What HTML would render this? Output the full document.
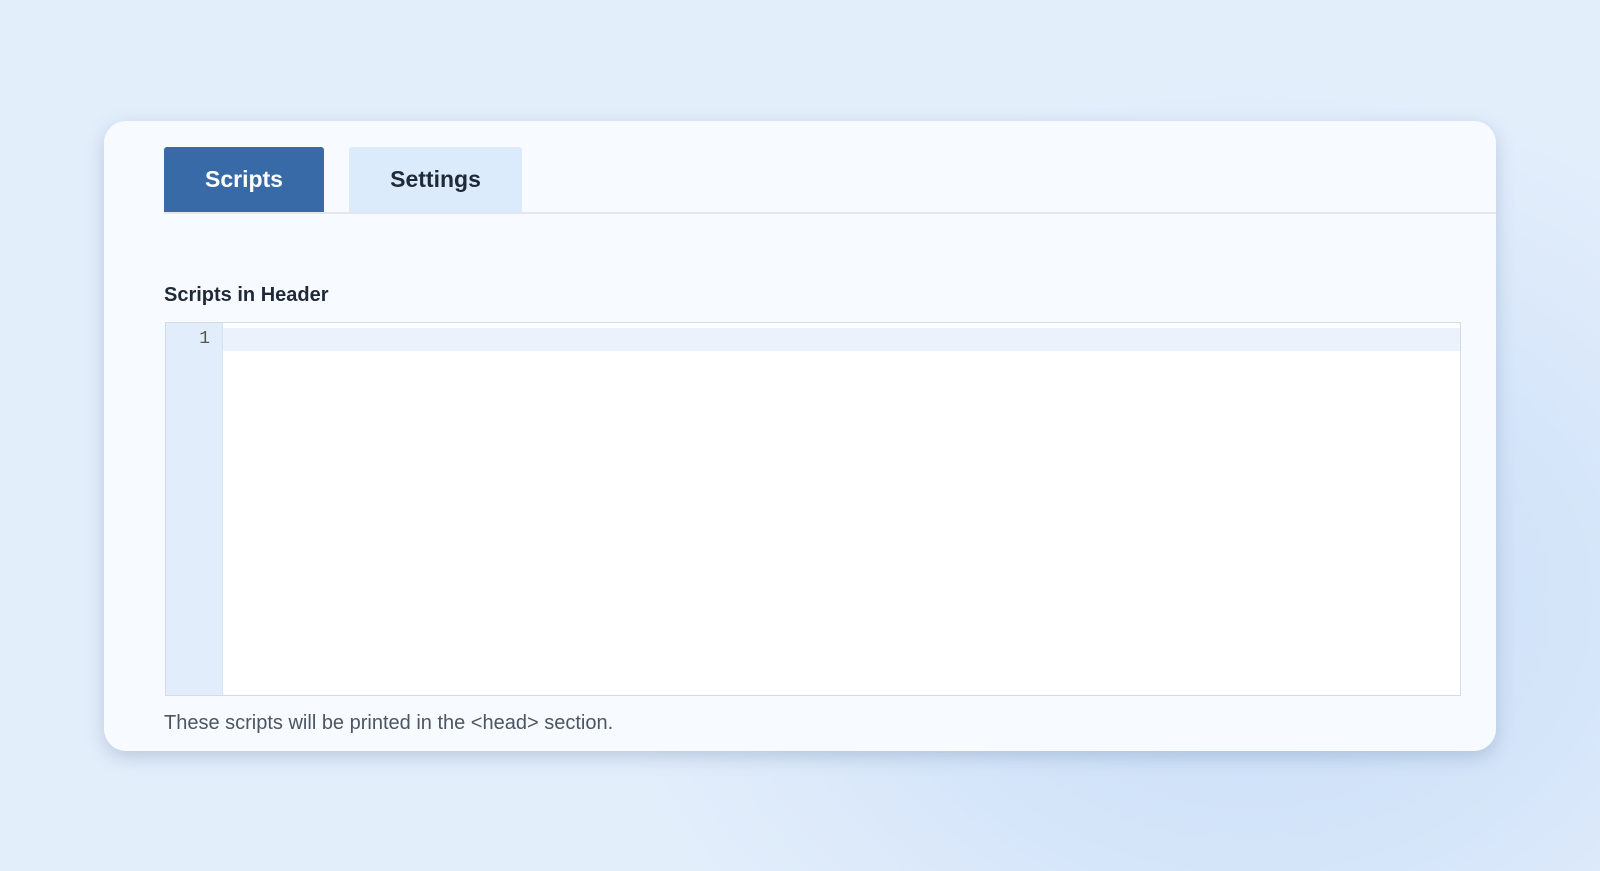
<!DOCTYPE html>
<html><head><style>
html,body{margin:0;padding:0}
body{width:1600px;height:871px;overflow:hidden;position:relative;font-family:"Liberation Sans",sans-serif;
background:radial-gradient(ellipse 650px 520px at 1250px 600px,#c9def8 0%,#d3e4f9 45%,#e3eefb 100%),#e3eefb;}
.card{position:absolute;left:104px;top:121px;width:1392px;height:630px;background:#f7fbff;border-radius:22px;box-shadow:0 6px 18px rgba(80,110,150,.28);overflow:hidden}
.tab{position:absolute;top:26px;height:65px;display:flex;align-items:center;justify-content:center;font-weight:bold;font-size:23px;border-radius:3px 3px 0 0}
.t1{left:60px;width:160px;background:#376aa7;color:#fff}
.t2{left:245px;width:173px;background:#dcebfb;color:#1f2937}
.line{position:absolute;left:60px;right:0;top:91px;height:2px;background:#e3e8ee}
.h{position:absolute;left:60px;top:163px;font-size:20px;font-weight:bold;color:#1f2937}
.ed{position:absolute;left:61px;top:201px;width:1294px;height:372px;background:#fff;border:1px solid #d6dbe2}
.gut{position:absolute;left:0;top:0;bottom:0;width:56px;background:#e2edfb;border-right:1px solid #d8e2ee}
.num{position:absolute;right:12px;top:6px;font-family:"Liberation Mono",monospace;font-size:18px;color:#555}
.act{position:absolute;left:57px;right:0;top:5px;height:23px;background:#ebf2fc}
.f{position:absolute;left:60px;top:591px;font-size:20px;color:#4b5563}
</style></head><body>
<div class="card">
<div class="tab t1">Scripts</div>
<div class="tab t2">Settings</div>
<div class="line"></div>
<div class="h">Scripts in Header</div>
<div class="ed"><div class="act"></div><div class="gut"><div class="num">1</div></div></div>
<div class="f">These scripts will be printed in the &lt;head&gt; section.</div>
</div>
</body></html>
